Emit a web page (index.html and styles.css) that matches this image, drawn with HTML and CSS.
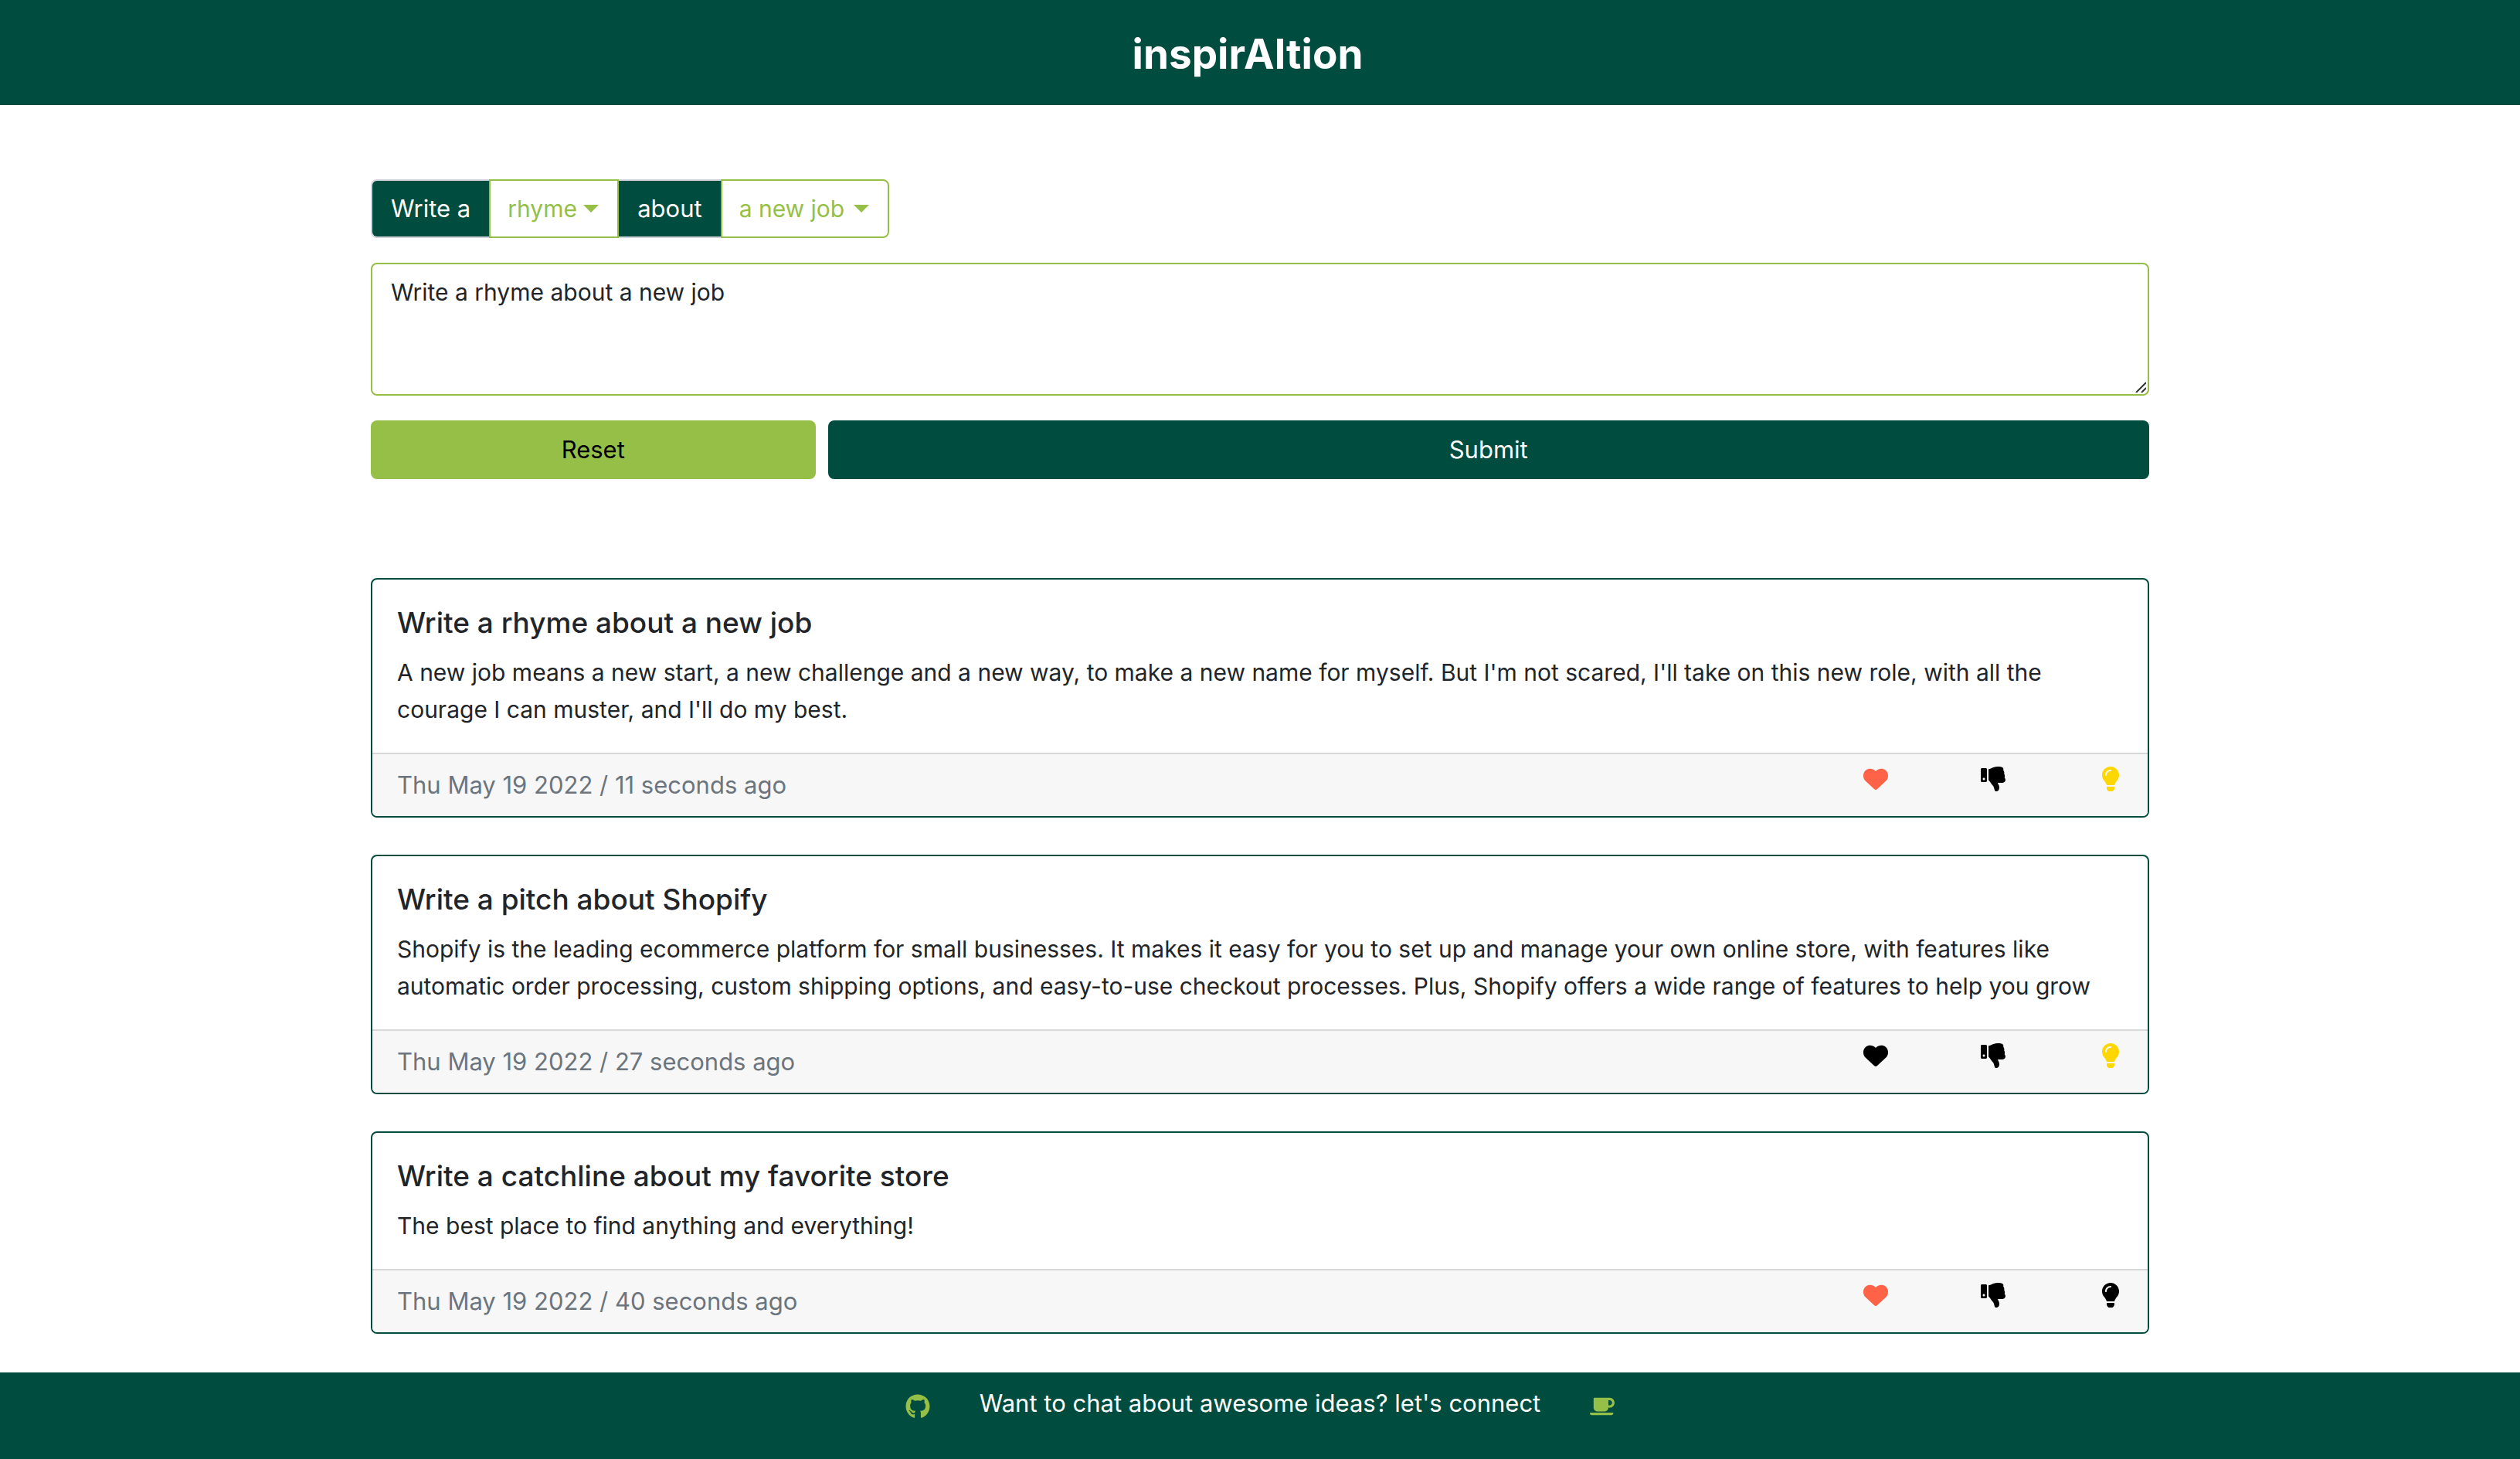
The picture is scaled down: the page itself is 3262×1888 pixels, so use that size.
FILE: index.html
```html
<!DOCTYPE html>
<html lang="en">
<head>
<meta charset="utf-8">
<meta name="viewport" content="width=device-width, initial-scale=1">
<title>inspirAItion</title>
<link rel="stylesheet" href="styles.css">
</head>
<body>
<svg class="sprite" aria-hidden="true">
  <symbol id="heart" viewBox="0 0 512 512"><path d="M0 190.900V185.100C0 115.200 50.520 55.580 119.400 44.100C164.100 36.510 211.400 51.370 244 84.020L256 96L267.100 84.020C300.600 51.370 347 36.510 392.600 44.100C461.500 55.580 512 115.200 512 185.100V190.900C512 232.400 494.800 272.100 464.400 300.400L283.700 469.100C276.200 476.100 266.300 480 256 480C245.700 480 235.800 476.100 228.300 469.100L47.590 300.400C17.230 272.100 0 232.400 0 190.900Z"/></symbol>
  <symbol id="dislike" viewBox="0 0 512 512"><path d="M0 56v240c0 13.255 10.745 24 24 24h80c13.255 0 24-10.745 24-24V56c0-13.255-10.745-24-24-24H24C10.745 32 0 42.745 0 56zm40 200c0-13.255 10.745-24 24-24s24 10.745 24 24-10.745 24-24 24-24-10.745-24-24zm272 256c-20.183 0-29.485-39.293-33.931-57.795-5.206-21.666-10.589-44.070-25.393-58.902-32.469-32.524-49.503-73.967-89.117-113.111a11.980 11.980 0 0 1-3.558-8.521V59.901c0-6.541 5.243-11.878 11.783-11.998 15.831-.290 36.694-9.079 52.651-16.178C256.189 17.598 295.709.017 343.995 0h2.844c42.777 0 93.363.413 113.774 29.737 8.392 12.057 10.446 27.034 6.148 44.632 16.312 17.053 25.063 48.863 16.382 74.757 17.544 23.432 19.143 56.132 9.308 79.469l.110.110c11.893 11.949 19.523 31.259 19.439 49.197-.156 30.352-26.157 58.098-59.553 58.098H350.723C358.030 364.340 384 388.132 384 430.548 384 504 336 512 312 512z"/></symbol>
  <symbol id="bulb" viewBox="0 0 352 512"><path d="M96.060 454.350c.010 6.290 1.870 12.450 5.360 17.690l17.090 25.690a31.990 31.990 0 0 0 26.640 14.280h61.710a31.990 31.990 0 0 0 26.640-14.280l17.090-25.690a31.989 31.989 0 0 0 5.360-17.690l.040-38.350H96.010l.050 38.350zM0 176c0 44.370 16.450 84.850 43.560 115.780 16.520 18.850 42.360 58.230 52.210 91.450.040.260.070.520.110.780h160.240c.040-.260.070-.510.110-.780 9.850-33.220 35.690-72.600 52.210-91.450C335.550 260.850 352 220.370 352 176 352 78.610 272.910-.300 175.450 0 73.440.310 0 82.970 0 176zm176-80c-44.110 0-80 35.890-80 80 0 8.840-7.160 16-16 16s-16-7.160-16-16c0-61.760 50.240-112 112-112 8.840 0 16 7.160 16 16s-7.160 16-16 16z"/></symbol>
  <symbol id="github" viewBox="0 0 496 512"><path d="M165.900 397.400c0 2-2.300 3.600-5.200 3.600-3.300.300-5.600-1.300-5.600-3.600 0-2 2.300-3.600 5.200-3.600 3-.300 5.600 1.300 5.600 3.600zm-31.100-4.500c-.700 2 1.300 4.300 4.300 4.900 2.600 1 5.600 0 6.200-2s-1.300-4.300-4.300-5.200c-2.600-.700-5.500.300-6.200 2.300zm44.200-1.700c-2.900.700-4.900 2.600-4.600 4.900.300 2 2.900 3.300 5.900 2.600 2.900-.700 4.900-2.600 4.600-4.600-.300-1.900-3-3.200-5.900-2.900zM244.800 8C106.100 8 0 113.300 0 252c0 110.900 69.800 205.800 169.500 239.200 12.800 2.300 17.300-5.600 17.300-12.100 0-6.200-.300-40.400-.300-61.400 0 0-70 15-84.700-29.800 0 0-11.400-29.100-27.800-36.600 0 0-22.900-15.700 1.600-15.400 0 0 24.900 2 38.600 25.800 21.900 38.600 58.600 27.500 72.900 20.900 2.300-16 8.800-27.100 16-33.700-55.900-6.200-112.300-14.300-112.300-110.500 0-27.500 7.600-41.300 23.600-58.900-2.600-6.500-11.100-33.300 2.600-67.900 20.900-6.500 69 27 69 27 20-5.600 41.500-8.500 62.800-8.500s42.800 2.900 62.800 8.500c0 0 48.100-33.600 69-27 13.700 34.700 5.200 61.400 2.600 67.900 16 17.700 25.800 31.500 25.800 58.900 0 96.500-58.900 104.200-114.800 110.500 9.200 7.900 17 22.900 17 46.400 0 33.700-.300 75.400-.300 83.600 0 6.500 4.600 14.400 17.300 12.100C428.200 457.800 496 362.900 496 252 496 113.300 383.500 8 244.800 8zM97.200 352.900c-1.300 1-1 3.300.700 5.200 1.600 1.600 3.900 2.300 5.200 1 1.300-1 1-3.300-.700-5.200-1.600-1.600-3.900-2.300-5.200-1zm-10.800-8.100c-.700 1.300.300 2.900 2.300 3.900 1.600 1 3.600.700 4.300-.700.700-1.300-.300-2.900-2.300-3.900-2-.600-3.600-.300-4.300.700zm32.400 35.600c-1.600 1.300-1 4.300 1.300 6.200 2.300 2.300 5.200 2.600 6.500 1 1.300-1.300.700-4.300-1.300-6.200-2.200-2.300-5.200-2.600-6.500-1zm-11.400-14.700c-1.600 1-1.600 3.600 0 5.900 1.600 2.300 4.300 3.300 5.600 2.300 1.600-1.300 1.600-3.900 0-6.200-1.400-2.300-4-3.300-5.600-2z"/></symbol>
  <symbol id="coffee" viewBox="0 0 640 512"><path d="M192 384h192c53 0 96-43 96-96h32c70.600 0 128-57.400 128-128S582.600 32 512 32H120c-13.300 0-24 10.700-24 24v232c0 53 43 96 96 96zM512 96c35.300 0 64 28.700 64 64s-28.700 64-64 64h-32V96h32zm47.700 384H48.300c-47.600 0-61-64-36-64h583.300c25 0 11.800 64-35.900 64z"/></symbol>
</svg>

<header class="navbar"><h1 class="brand">inspirAItion</h1></header>

<main class="container">
  <form class="prompt-form">
    <div class="input-group">
      <label class="group-text group-start" for="kind">Write a</label>
      <span class="dropdown dropdown-kind">
        <select id="kind"><option>rhyme</option><option>pitch</option><option>catchline</option></select>
        <svg class="caret" viewBox="0 0 20 10" aria-hidden="true"><path d="M0 0h20L10 10z"/></svg>
      </span>
      <label class="group-text" for="topic">about</label>
      <span class="dropdown dropdown-topic">
        <select id="topic"><option>a new job</option><option>Shopify</option><option>my favorite store</option></select>
        <svg class="caret" viewBox="0 0 20 10" aria-hidden="true"><path d="M0 0h20L10 10z"/></svg>
      </span>
    </div>
    <div class="prompt-box">
      <textarea class="prompt" aria-label="Prompt">Write a rhyme about a new job</textarea>
      <svg class="grip" viewBox="0 0 14 14" aria-hidden="true"><path d="M1 14L14 1M8 14L14 8"/></svg>
    </div>
    <div class="actions">
      <button class="btn btn-reset" type="reset">Reset</button>
      <button class="btn btn-submit" type="submit">Submit</button>
    </div>
  </form>

  <section class="cards" aria-label="Results">
    <article class="card">
      <div class="card-body">
        <h2 class="card-title">Write a rhyme about a new job</h2>
        <p class="card-text">A new job means a new start, a new challenge and a new way, to make a new name for myself. But I'm not scared, I'll take on this new role, with all the courage I can muster, and I'll do my best.</p>
      </div>
      <div class="card-footer">
        <span class="date">Thu May 19 2022 / 11 seconds ago</span>
        <div class="reactions">
          <button class="icon-btn loved" type="button" aria-label="Love"><svg class="icon"><use href="#heart"/></svg></button>
          <button class="icon-btn" type="button" aria-label="Dislike"><svg class="icon"><use href="#dislike"/></svg></button>
          <button class="icon-btn bright" type="button" aria-label="Inspiring"><svg class="icon"><use href="#bulb"/></svg></button>
        </div>
      </div>
    </article>
    <article class="card">
      <div class="card-body">
        <h2 class="card-title">Write a pitch about Shopify</h2>
        <p class="card-text">Shopify is the leading ecommerce platform for small businesses. It makes it easy for you to set up and manage your own online store, with features like automatic order processing, custom shipping options, and easy-to-use checkout processes. Plus, Shopify offers a wide range of features to help you grow</p>
      </div>
      <div class="card-footer">
        <span class="date">Thu May 19 2022 / 27 seconds ago</span>
        <div class="reactions">
          <button class="icon-btn" type="button" aria-label="Love"><svg class="icon"><use href="#heart"/></svg></button>
          <button class="icon-btn" type="button" aria-label="Dislike"><svg class="icon"><use href="#dislike"/></svg></button>
          <button class="icon-btn bright" type="button" aria-label="Inspiring"><svg class="icon"><use href="#bulb"/></svg></button>
        </div>
      </div>
    </article>
    <article class="card">
      <div class="card-body">
        <h2 class="card-title">Write a catchline about my favorite store</h2>
        <p class="card-text">The best place to find anything and everything!</p>
      </div>
      <div class="card-footer">
        <span class="date">Thu May 19 2022 / 40 seconds ago</span>
        <div class="reactions">
          <button class="icon-btn loved" type="button" aria-label="Love"><svg class="icon"><use href="#heart"/></svg></button>
          <button class="icon-btn" type="button" aria-label="Dislike"><svg class="icon"><use href="#dislike"/></svg></button>
          <button class="icon-btn" type="button" aria-label="Inspiring"><svg class="icon"><use href="#bulb"/></svg></button>
        </div>
      </div>
    </article>
  </section>
</main>

<footer class="footer">
  <a class="footer-link" href="#github" aria-label="GitHub"><svg class="icon"><use href="#github"/></svg></a>
  <p class="footer-text">Want to chat about awesome ideas? let's connect</p>
  <a class="footer-link" href="#coffee" aria-label="Coffee"><svg class="icon"><use href="#coffee"/></svg></a>
</footer>
</body>
</html>
```

FILE: styles.css
```css
:root {
  --green: #004c3f;
  --lime: #95bf47;
}

*, *::before, *::after { box-sizing: border-box; }

body {
  margin: 0;
  min-height: 100vh;
  display: flex;
  flex-direction: column;
  background: #fff;
  color: #212529;
  font-family: Inter, "Liberation Sans", sans-serif;
  font-size: 31px;
  line-height: 48px;
}

h1, h2, p { margin: 0; }

button, select, textarea {
  font: inherit;
  color: inherit;
}

.sprite { display: none; }

.icon {
  display: block;
  width: 32px;
  height: 32px;
  fill: currentColor;
}

.navbar {
  display: flex;
  justify-content: center;
  padding: 30px 0 26px;
  background: var(--green);
}

.brand {
  margin-right: 32px;
  color: #fff;
  font-size: 53px;
  font-weight: 700;
  line-height: 80px;
}

.container {
  width: 100%;
  max-width: 2302px;
  margin: 0 auto;
  padding: 96px 0 48px;
}

.prompt-form {
  display: flex;
  flex-direction: column;
  gap: 32px;
}

.input-group {
  display: flex;
}

.group-text {
  padding: 12px 24px;
  border: 2px solid #ced4da;
  border-width: 2px 0;
  background: var(--green);
  color: #fff;
}

.group-start {
  border-left-width: 2px;
  border-radius: 8px 0 0 8px;
}

.dropdown {
  display: grid;
  align-items: center;
}

.dropdown-kind { width: 168px; }
.dropdown-topic { width: 218px; }

.dropdown select {
  grid-area: 1 / 1;
  width: 100%;
  height: 76px;
  padding: 0 22px;
  border: 2px solid var(--lime);
  border-radius: 0;
  background: #fff;
  color: var(--lime);
  font-size: 30px;
  appearance: none;
}

.dropdown-topic select { border-radius: 0 8px 8px 0; }

.caret {
  grid-area: 1 / 1;
  justify-self: end;
  width: 20px;
  height: 10px;
  margin-right: 26px;
  fill: var(--lime);
  pointer-events: none;
}

.prompt-box { display: grid; }

.prompt {
  grid-area: 1 / 1;
  width: 100%;
  height: 172px;
  padding: 12px 24px;
  border: 2px solid var(--lime);
  border-radius: 8px;
  background: #fff;
  font-size: 30px;
  resize: vertical;
}

.prompt::-webkit-resizer { display: none; }

.grip {
  grid-area: 1 / 1;
  place-self: end;
  width: 14px;
  height: 14px;
  margin: 4px;
  fill: none;
  stroke: #333;
  stroke-width: 2;
  pointer-events: none;
}

.actions {
  display: flex;
  gap: 16px;
}

.btn {
  padding: 14px 24px;
  border: 0;
  border-radius: 8px;
}

.btn-reset {
  width: 25%;
  background: var(--lime);
  color: #000;
}

.btn-submit {
  flex: 1;
  background: var(--green);
  color: #fff;
}

.cards {
  display: grid;
  gap: 48px;
  margin-top: 128px;
}

.card {
  overflow: hidden;
  border: 2px solid var(--green);
  border-radius: 8px;
}

.card-body { padding: 32px; }

.card-title {
  margin-bottom: 16px;
  font-size: 37px;
  font-weight: 500;
  line-height: 48px;
}

.card-text { font-size: 30px; }

.card-footer {
  display: flex;
  justify-content: space-between;
  padding: 16px 32px;
  border-top: 2px solid #d8d8d8;
  background: #f7f7f7;
}

.date { color: #6c757d; }

.reactions {
  display: flex;
  align-items: flex-start;
  gap: 120px;
}

.icon-btn {
  padding: 0;
  border: 0;
  background: none;
  color: #000;
}

.icon-btn.loved { color: tomato; }
.icon-btn.bright { color: gold; }

.footer {
  display: flex;
  justify-content: center;
  gap: 64px;
  margin-top: auto;
  padding: 16px 0 48px;
  background: var(--green);
  color: #fff;
}

.footer-link {
  padding-top: 12px;
  color: var(--lime);
}
```
